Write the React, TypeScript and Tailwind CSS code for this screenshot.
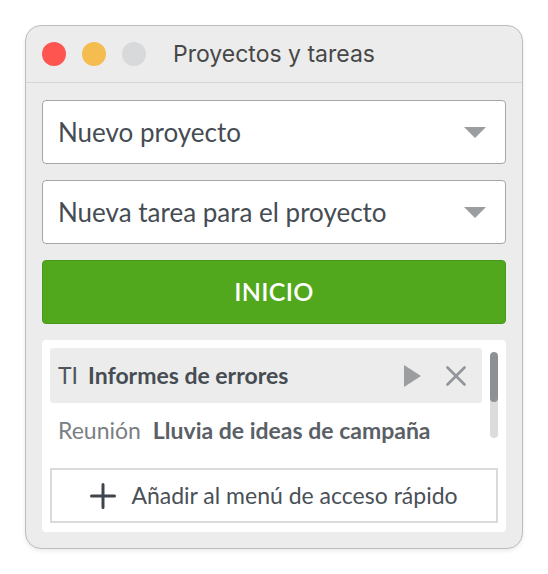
import React from "react";

const body = { fontFamily: "Lato, 'Open Sans', sans-serif" };

function Caret() {
  return (
    <svg width="22" height="11" viewBox="0 0 22 11">
      <path d="M0 0 H22 L11 11 Z" fill="#9b9ea1" />
    </svg>
  );
}

export default function App() {
  return (
    <div className="w-[548px] h-[574px] bg-white pt-[25px] pl-[25px]" style={body}>
      <div className="w-[498px] h-[524px] rounded-[16px] border border-[#bdbdbd] bg-[#ebeceb] flex flex-col overflow-hidden shadow-[0_2px_4px_rgba(0,0,0,0.08)]">
        <div className="h-[57px] shrink-0 border-b border-[#d6d6d6] flex items-center pl-[16px]">
          <div className="flex gap-4">
            <div className="w-6 h-6 rounded-full bg-[#fe5551]" />
            <div className="w-6 h-6 rounded-full bg-[#f5bd4f]" />
            <div className="w-6 h-6 rounded-full bg-[#d8d9da]" />
          </div>
          <div
            className="ml-[27px] text-[23px] text-[#474747] leading-none"
            style={{ fontFamily: "Inter, 'Noto Sans', sans-serif" }}
          >
            Proyectos y tareas
          </div>
        </div>
        <div className="flex flex-col gap-4 px-4 pt-[17px] pb-4">
          <div className="h-16 rounded-[4px] border-[1.5px] border-[#a3a7ab] bg-white pl-[15px] pr-[19px] flex items-center justify-between">
            <span className="text-[26px] text-[#464c53]">Nuevo proyecto</span>
            <Caret />
          </div>
          <div className="h-16 rounded-[4px] border-[1.5px] border-[#a3a7ab] bg-white pl-[15px] pr-[19px] flex items-center justify-between">
            <span className="text-[26px] text-[#464c53]">Nueva tarea para el proyecto</span>
            <Caret />
          </div>
          <div className="h-16 rounded-[4px] border border-[#4b961c] bg-[#52a81d] flex items-center justify-center">
            <span className="text-[25px] font-semibold text-white tracking-[0.3px]">INICIO</span>
          </div>
          <div className="h-[192px] rounded-[4px] bg-white p-2 flex flex-col gap-2">
            <div className="h-[112px] flex overflow-hidden">
              <div className="w-[432px] flex flex-col">
                <div className="h-[55px] shrink-0 rounded-[3px] bg-[#ebeceb] flex items-center pl-2 pr-4">
                  <span className="text-[23px] text-[#4f555b]">TI</span>
                  <span className="ml-[10px] text-[23px] font-bold text-[#464c53]">Informes de errores</span>
                  <div className="ml-auto flex items-center">
                    <svg width="17" height="22" viewBox="0 0 17 22">
                      <path d="M0 0 L17 11 L0 22 Z" fill="#9b9ea1" />
                    </svg>
                    <svg className="ml-[25px]" width="20" height="20" viewBox="0 0 20 20">
                      <path d="M1.5 1.5 L18.5 18.5 M18.5 1.5 L1.5 18.5" stroke="#919498" strokeWidth="2.6" strokeLinecap="round" />
                    </svg>
                  </div>
                </div>
                <div className="h-[55px] shrink-0 flex items-center pl-2">
                  <span className="text-[23px] text-[#7a7f84]">Reunión</span>
                  <span className="ml-[12px] text-[23px] font-bold text-[#5a6066]">Lluvia de ideas de campaña</span>
                </div>
              </div>
              <div className="ml-2 w-2 pt-1">
                <div className="h-[86px] w-2 rounded-full bg-[#dcdcdc] overflow-hidden">
                  <div className="h-[50px] w-2 rounded-full bg-[#8e9194]" />
                </div>
              </div>
            </div>
            <div className="h-[55px] border-2 border-[#dadada] flex items-center justify-center gap-[15px]">
              <svg width="26" height="26" viewBox="0 0 26 26">
                <path d="M13 1.5 V24.5 M1.5 13 H24.5" stroke="#3e454c" strokeWidth="3" strokeLinecap="round" />
              </svg>
              <span className="text-[23px] text-[#4a5057]">Añadir al menú de acceso rápido</span>
            </div>
          </div>
        </div>
      </div>
    </div>
  );
}
